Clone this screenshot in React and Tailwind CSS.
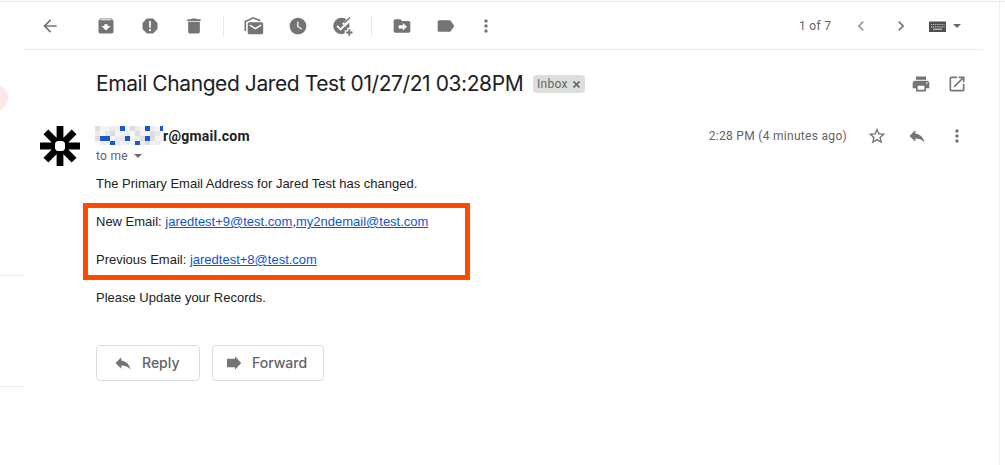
import React from "react";

const P = {
  back: "M20 11H7.8l5.6-5.6L12 4l-8 8 8 8 1.4-1.4L7.8 13H20z",
  archive: "M20.54 5.23l-1.39-1.68C18.88 3.21 18.47 3 18 3H6c-.47 0-.88.21-1.16.55L3.46 5.23C3.17 5.57 3 6.02 3 6.5V19c0 1.1.9 2 2 2h14c1.1 0 2-.9 2-2V6.5c0-.48-.17-.93-.46-1.27zM12 17.5L6.5 12H10v-2h4v2h3.5L12 17.5zM5.12 5l.81-1h12l.94 1H5.12z",
  spam: "M15.73 3H8.27L3 8.27v7.46L8.27 21h7.46L21 15.73V8.27L15.73 3zM12 18.3c-.72 0-1.3-.58-1.3-1.3s.58-1.3 1.3-1.3 1.3.58 1.3 1.3-.58 1.3-1.3 1.3zM13 14h-2V6h2v8z",
  trash: "M5 19c0 1.1.9 2 2 2h10c1.1 0 2-.9 2-2V7H5v12zM20 4h-4.500l-1-1h-5l-1 1H4v2h16V4z",
  clock: "M12 2C6.480 2 2 6.480 2 12s4.480 10 10 10 10-4.480 10-10S17.520 2 12 2zm4.200 14.200L11 13V7h1.500v5.200l4.500 2.700-.8 1.300z",
  move: "M20 6h-8l-2-2H4c-1.100 0-2 .900-2 2v12c0 1.100.900 2 2 2h16c1.100 0 2-.900 2-2V8c0-1.100-.900-2-2-2zm-7 11.500V15H8v-4h5V8.500l5 4.500-5 4.500z",
  label: "M17.63 5.840C17.270 5.330 16.670 5 16 5L4 5.010C2.900 5.010 2 5.900 2 7v10c0 1.100.900 1.990 2 1.990L16 19c.67 0 1.270-.33 1.630-.84L22 12l-4.370-6.160z",
  more: "M12 8c1.100 0 2-.900 2-2s-.900-2-2-2-2 .900-2 2 .900 2 2 2zm0 2c-1.100 0-2 .900-2 2s.900 2 2 2 2-.900 2-2-.900-2-2-2zm0 6c-1.100 0-2 .900-2 2s.900 2 2 2 2-.900 2-2-.900-2-2-2z",
  left: "M15.410 7.410L14 6l-6 6 6 6 1.410-1.410L10.830 12z",
  right: "M10 6L8.590 7.410 13.170 12l-4.580 4.590L10 18l6-6z",
  print: "M19 8H5c-1.660 0-3 1.340-3 3v6h4v4h12v-4h4v-6c0-1.660-1.340-3-3-3zm-3 11H8v-5h8v5zm3-7c-.550 0-1-.450-1-1s.450-1 1-1 1 .450 1 1-.450 1-1 1zm-1-9H6v4h12V3z",
  open: "M19 19H5V5h7V3H5c-1.110 0-2 .900-2 2v14c0 1.100.890 2 2 2h14c1.100 0 2-.900 2-2v-7h-2v7zM14 3v2h3.590l-9.830 9.830 1.410 1.410L19 6.410V10h2V3h-7z",
  star: "M22 9.240l-7.190-.620L12 2 9.190 8.630 2 9.240l5.460 4.730L5.820 21 12 17.270 18.180 21l-1.630-7.030L22 9.240zM12 15.400l-3.760 2.270 1-4.280-3.320-2.880 4.380-.380L12 6.100l1.710 4.040 4.380.380-3.320 2.880 1 4.280L12 15.400z",
  reply: "M10 9V5l-7 7 7 7v-4.100c5 0 8.500 1.600 11 5.100-1-5-4-10-11-11z",
  forward: "M2.400 7h9.600V3.800L19.400 12 12 20.200V17H2.400z",
};

function Icon({ name, className = "size-5 text-[#747474]" }) {
  return (
    <svg viewBox="0 0 24 24" fill="currentColor" fillRule="evenodd" className={`shrink-0 ${className}`}>
      <path d={P[name]} />
    </svg>
  );
}

function UnreadIcon() {
  return (
    <svg viewBox="0 0 24 24" className="size-5 shrink-0 overflow-visible text-[#747474]">
      <path d="M1.600 18V6.500L11 2.200l8.500 3.600" fill="none" stroke="currentColor" strokeWidth="2" />
      <rect x="4.500" y="7.500" width="18.500" height="14.500" rx="2" fill="currentColor" />
      <path d="M7 11l6.700 4.200L20.500 11" fill="none" stroke="#fff" strokeWidth="1.800" />
    </svg>
  );
}

function AddTaskIcon() {
  return (
    <svg viewBox="0 0 24 24" className="size-5 shrink-0 overflow-visible text-[#747474]">
      <circle cx="11.300" cy="12" r="9.800" fill="currentColor" />
      <path d="M22.500 2.500L14 11" stroke="#fff" strokeWidth="5" />
      <path d="M6 11.800l4.300 4.300L20.500 5.900" fill="none" stroke="#fff" strokeWidth="2.200" />
      <path d="M14.600 8.500L21.600 1.900" stroke="currentColor" strokeWidth="1.700" />
      <path d="M20.800 14v11M15.300 19.500h11" stroke="#fff" strokeWidth="5" />
      <path d="M20.800 16v7.600M17 19.800h7.600" stroke="currentColor" strokeWidth="2.200" />
    </svg>
  );
}

function Caret({ className }) {
  return (
    <svg viewBox="0 0 8 4" fill="currentColor" className={`h-1 w-2 shrink-0 text-[#6b6b6b] ${className}`}>
      <path d="M0 0h8L4 4z" />
    </svg>
  );
}

function Keyboard() {
  return (
    <svg viewBox="0 0 18 12" className="mt-0.5 ml-[18px] h-3 w-[18px] shrink-0">
      <rect x="0" y="0.500" width="17" height="10.500" rx="0.500" fill="#505050" />
      <path d="M2 3.500h13.500M2 5.800h13.500" stroke="#c5c5c5" strokeWidth="1.200" strokeDasharray="1.200 0.900" />
      <path d="M4 8.300h9" stroke="#c5c5c5" strokeWidth="1.200" />
    </svg>
  );
}

function Toolbar() {
  return (
    <div className="flex h-12 items-center border-b border-[#ededed] pl-4">
      <Icon name="back" />
      <div className="ml-9 flex gap-6">
        <Icon name="archive" />
        <Icon name="spam" />
        <Icon name="trash" />
      </div>
      <div className="ml-[19px] h-5 w-px bg-[#e8e8e8]" />
      <div className="ml-5 flex gap-6">
        <UnreadIcon />
        <Icon name="clock" />
        <AddTaskIcon />
      </div>
      <div className="ml-[19px] h-5 w-px bg-[#e8e8e8]" />
      <div className="ml-5 flex gap-6">
        <Icon name="move" />
        <Icon name="label" />
      </div>
      <Icon name="more" className="ml-5 size-5 text-[#747474]" />
      <div className="ml-auto flex items-center pr-[22px]">
        <span className="w-[33px] whitespace-nowrap font-[Roboto,sans-serif] text-xs tracking-[0.3px] text-[#5f6368]">1 of 7</span>
        <Icon name="left" className="ml-[19px] size-5 text-[#9a9a9a]" />
        <Icon name="right" className="ml-5 size-5 text-[#747474]" />
        <Keyboard />
        <Caret className="ml-1.5" />
      </div>
    </div>
  );
}

const MOSAIC = [
  ["#ffffff", "#dddddd", "#f3f3f3", "#f3f3f5", "#ececec", "#f0f0f0", "#1a56cf", "#f4f4f5", "#dedede", "#ececec", "#f5f5f5", "#1a56cf", "#ececec", "#f4f4f4", "#1a56cf"],
  ["#fefefe", "#ececec", "#fafafa", "#e6e6e8", "#dcdcdc", "#f4f4f4", "#f1f1f3", "#ececec", "#f7f7f7", "#dedee0", "#f2f2f2", "#f5f5f5", "#dddddd", "#e6e6e6", "#f8f8f8"],
  ["#ffffff", "#dddddd", "#1a56cf", "#1a56cf", "#f4f4f4", "#ececec", "#e6e6e8", "#1a56cf", "#f4f4f4", "#ececec", "#dedede", "#1a56cf", "#dddddd", "#f2f2f2", "#f6f6f6"],
  ["#fefefe", "#fafafa", "#ececec", "#f2f2f2", "#1a56cf", "#e6e6e6", "#f5f5f5", "#ececec", "#f3f3f3", "#1a56cf", "#ececec", "#dddddd", "#f3f3f3", "#ececec", "#f8f8f8"],
];

function Mosaic() {
  return (
    <svg viewBox="0 0 73 19" className="-mt-px -ml-[6px] h-[19px] w-[73px] shrink-0" shapeRendering="crispEdges">
      {MOSAIC.map((row, y) => row.map((c, x) => <rect key={`${x}-${y}`} x={x * 5} y={y * 5} width="5" height="5" fill={c} />))}
    </svg>
  );
}

function Logo() {
  return (
    <svg viewBox="0 0 40 40" className="mt-2 size-10 shrink-0">
      <path d="M20 0v40M0 20h40M5.900 5.900l28.200 28.200M34.100 5.900L5.900 34.100" stroke="#000" strokeWidth="6.800" />
      <rect x="15" y="15" width="10" height="10" rx="3.500" fill="#fff" />
    </svg>
  );
}

function Link({ children }) {
  return <a className="text-[#1155cc] underline">{children}</a>;
}

function ActionButton({ icon, label, className }) {
  return (
    <button className={`flex h-9 items-center rounded border border-[#dadce0] font-[Inter,sans-serif] text-sm font-medium text-[#5f6368] ${className}`}>
      <Icon name={icon} />
      <span>{label}</span>
    </button>
  );
}

export default function App() {
  return (
    <div className="h-[465px] w-[1005px] overflow-hidden bg-white pt-px">
      <div className="flex h-full border-t border-[#ebebeb]">
        <aside className="flex w-6 shrink-0 flex-col overflow-hidden">
          <div className="mt-[82px] -ml-5 size-7 shrink-0 rounded-full bg-[#fce8e6]" />
          <div className="mt-[163px] h-[112px] shrink-0 border-y border-[#ededed]" />
        </aside>
        <main className="w-[959px] shrink-0">
          <Toolbar />
          <div className="flex h-[68px] items-center pl-[72px]">
            <h1 className="w-[427px] whitespace-nowrap font-[Inter,sans-serif] text-[21px] tracking-[-0.42px] text-[#202124]">Email Changed Jared Test 01/27/21 03:28PM</h1>
            <div className="ml-2.5 flex h-[18px] w-[52px] items-center rounded bg-[#dddddd] pl-1 font-[Roboto,sans-serif] text-xs tracking-[0.3px] text-[#666666]">
              Inbox
              <svg viewBox="0 0 7 7" className="ml-[5px] size-[7px]"><path d="M0.500 0.500l6 6M6.500 0.500L0.500 6.500" stroke="#666" strokeWidth="1.700" /></svg>
            </div>
            <Icon name="print" className="ml-auto size-5 text-[#747474]" />
            <Icon name="open" className="mr-4 ml-4 size-5 text-[#747474]" />
          </div>
          <div className="flex h-14 pl-4">
            <Logo />
            <div className="ml-4 pt-2">
              <div className="flex h-5 items-center">
                <Mosaic />
                <span className="font-[Roboto,sans-serif] text-sm font-bold tracking-[0.25px] text-[#202124]">r@gmail.com</span>
              </div>
              <div className="flex h-5 items-center font-[Roboto,sans-serif] text-xs tracking-[0.3px] text-[#5f6368]">
                to me <Caret className="ml-[6px]" />
              </div>
            </div>
            <div className="ml-auto flex h-9 items-center pr-4">
              <span className="whitespace-nowrap font-[Roboto,sans-serif] text-xs tracking-[0.3px] text-[#5f6368]">2:28 PM (4 minutes ago)</span>
              <Icon name="star" className="ml-5 size-5 text-[#747474]" />
              <Icon name="reply" className="ml-5 size-5 text-[#747474]" />
              <Icon name="more" className="ml-5 size-5 text-[#747474]" />
            </div>
          </div>
          <div className="pl-[59px] font-['Liberation_Sans',Arial,sans-serif] text-[13px] leading-[19px] text-[#222222]">
            <p className="h-[29px] pl-[13px]">The Primary Email Address for Jared Test has changed.</p>
            <div className="flex h-[77px] w-[387px] flex-col gap-[19px] border-[5px] border-[#ff4a00] pt-1 pl-2">
              <p className="whitespace-nowrap">New Email: <Link>jaredtest+9@test.com</Link>,<Link>my2ndemail@test.com</Link></p>
              <p>Previous Email: <Link>jaredtest+8@test.com</Link></p>
            </div>
            <p className="pt-2 pl-[13px]">Please Update your Records.</p>
          </div>
          <div className="mt-[38px] flex gap-3 pl-[72px]">
            <ActionButton icon="reply" label="Reply" className="w-[104px] gap-[9px] pl-4" />
            <ActionButton icon="forward" label="Forward" className="w-28 gap-[7px] pl-3" />
          </div>
        </main>
        <div className="ml-4 w-px shrink-0 bg-[#f0f0f0]" />
      </div>
    </div>
  );
}
